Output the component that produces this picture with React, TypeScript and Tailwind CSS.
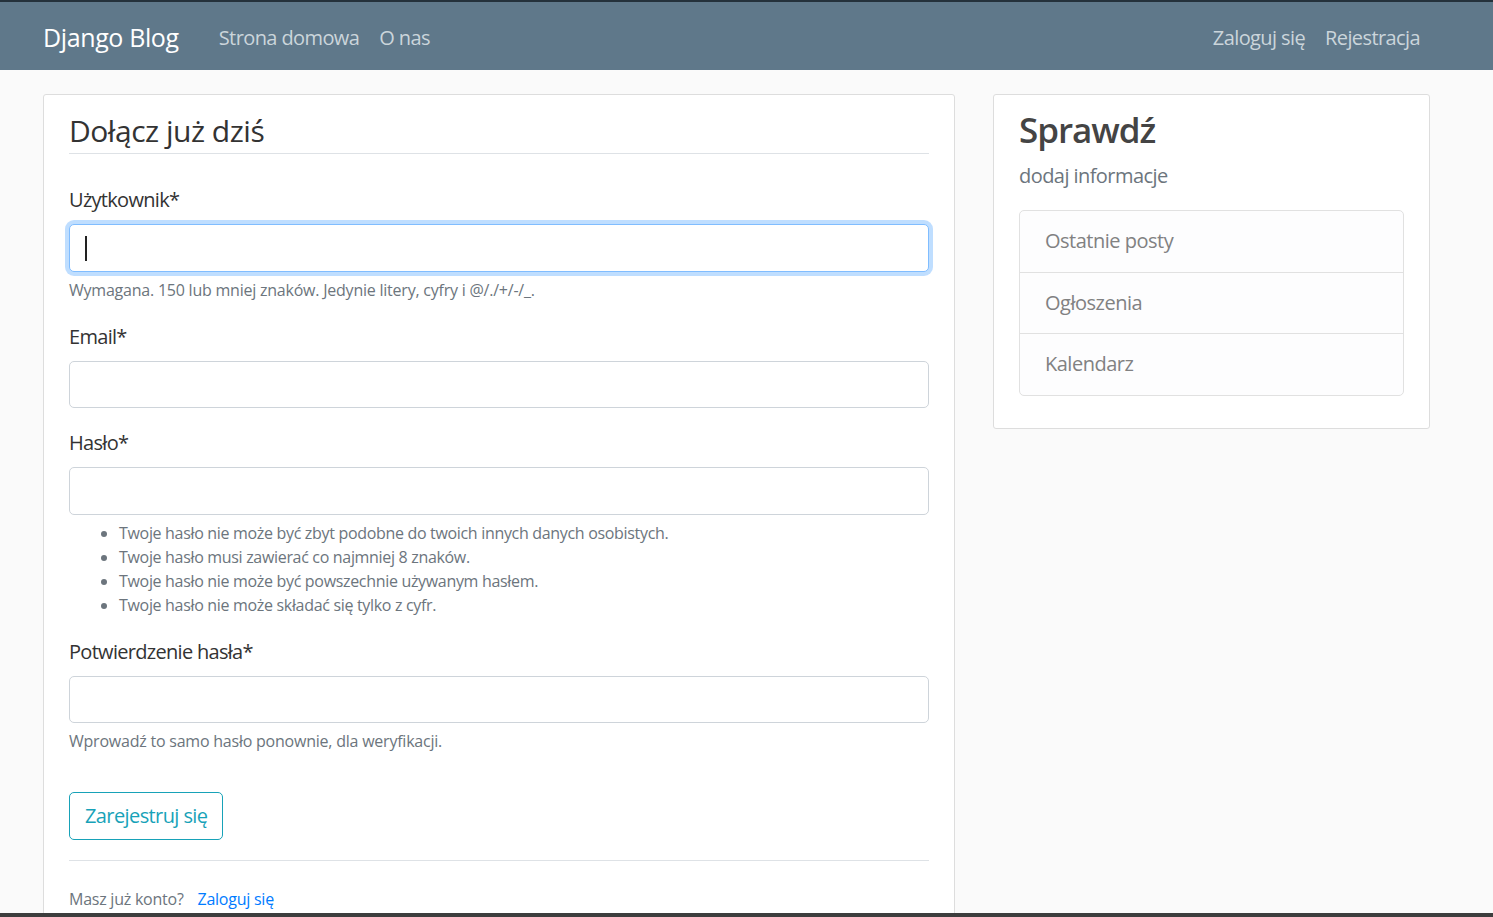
import React from 'react';

const font = "font-['Segoe_UI','Open_Sans',sans-serif]";

const Field = ({
  label,
  focused,
  help,
  children,
}: {
  label: string;
  focused?: boolean;
  help?: string;
  children?: React.ReactNode;
}) => (
  <div className="mb-[20px]">
    <label className="block text-[20px] leading-[30px] tracking-[-0.035em] mb-[9px] text-[#333]">{label}</label>
    <div className="relative">
      <input
        type="text"
        className={`block w-full h-[47.5px] rounded-[5px] bg-white px-[15px] outline-none ${
          focused
            ? 'border border-[#80bdff] shadow-[0_0_0_4px_rgba(0,123,255,0.25)]'
            : 'border border-[#ced4da]'
        }`}
      />
      {focused && <span className="absolute left-[16px] top-[12px] h-[25px] w-[1.5px] bg-[#222]"></span>}
    </div>
    {help && (
      <small className="block mt-[6px] text-[16px] leading-[24px] tracking-[-0.014em] text-[#6c757d]">{help}</small>
    )}
    {children}
  </div>
);

const passwordRules = [
  'Twoje hasło nie może być zbyt podobne do twoich innych danych osobistych.',
  'Twoje hasło musi zawierać co najmniej 8 znaków.',
  'Twoje hasło nie może być powszechnie używanym hasłem.',
  'Twoje hasło nie może składać się tylko z cyfr.',
];

export default function App() {
  return (
    <div className={`${font} h-[917px] overflow-hidden flex flex-col bg-[#fafafa] text-[#333]`}>
      <header className="h-[70px] shrink-0 bg-[#5f788a] border-t-2 border-[#24313b] flex items-center pt-[3px]">
        <nav className="w-[1387px] ml-[43px] flex items-center">
          <span className="text-[25px] leading-[37px] tracking-[-0.015em] text-white mr-[30px]">Django Blog</span>
          <div className="flex">
            <a className="px-[10px] text-[20px] leading-[30px] tracking-[-0.03em] text-[#cbd5db]">Strona domowa</a>
            <a className="px-[10px] text-[20px] leading-[30px] tracking-[-0.03em] text-[#cbd5db]">O nas</a>
          </div>
          <div className="flex ml-auto">
            <a className="px-[10px] text-[20px] leading-[30px] tracking-[-0.03em] text-[#cbd5db]">Zaloguj się</a>
            <a className="px-[10px] text-[20px] leading-[30px] tracking-[-0.03em] text-[#cbd5db]">Rejestracja</a>
          </div>
        </nav>
      </header>

      <main className="flex-1 overflow-hidden">
        <div className="w-[1387px] ml-[43px] mt-[24px] flex gap-[38px] items-start">
          <div className="w-[912px] shrink-0 bg-white border border-[#dddddd] rounded-[3px] px-[25px] pt-[13px] pb-[12px]">
            <form>
              <fieldset>
                <legend className="block w-full text-[30px] leading-[45px] tracking-[-0.016em] text-[#333] border-b border-[#dee2e6] mb-[31px]">
                  Dołącz już dziś
                </legend>
                <Field
                  label="Użytkownik*"
                  focused
                  help="Wymagana. 150 lub mniej znaków. Jedynie litery, cyfry i @/./+/-/_."
                />
                <Field label="Email*" />
                <Field label="Hasło*">
                  <ul className="mt-[6px] mb-[3px] pl-[50px] list-disc text-[16px] leading-[24px] tracking-[-0.02em] text-[#6c757d]">
                    {passwordRules.map((rule) => (
                      <li key={rule}>{rule}</li>
                    ))}
                  </ul>
                </Field>
                <Field label="Potwierdzenie hasła*" help="Wprowadź to samo hasło ponownie, dla weryfikacji." />
              </fieldset>
              <div className="mt-[19px] mb-[20px]">
                <button
                  type="button"
                  className="h-[47.5px] px-[15px] rounded-[5px] border border-[#17a2b8] text-[#17a2b8] text-[20px] leading-[30px] tracking-[-0.03em] bg-white"
                >
                  Zarejestruj się
                </button>
              </div>
            </form>
            <div className="border-t border-[#dee2e6] pt-[22px] text-[20px] leading-[30px]">
              <small className="text-[16px] tracking-[-0.015em] text-[#6c757d]">
                Masz już konto? <a className="ml-[10px] text-[#007bff]">Zaloguj się</a>
              </small>
            </div>
          </div>

          <aside className="w-[437px] shrink-0 bg-white border border-[#dddddd] rounded-[3px] px-[25px] pt-[14px] pb-[12px]">
            <h3 className="text-[35px] leading-[42px] font-semibold tracking-[-0.03em] text-[#444]">Sprawdź</h3>
            <p className="mt-[10px] mb-[19px] text-[20px] leading-[30px] tracking-[-0.028em] text-[#6c757d]">
              dodaj informacje
            </p>
            <ul className="mb-[20px] rounded-[5px] border border-[#e1e1e1] bg-[#fdfdfe] overflow-hidden">
              {['Ostatnie posty', 'Ogłoszenia', 'Kalendarz'].map((item, i) => (
                <li
                  key={item}
                  className={`px-[25px] py-[15.25px] text-[20px] leading-[30px] tracking-[-0.025em] text-[#818182] ${
                    i > 0 ? 'border-t border-[#e1e1e1]' : ''
                  }`}
                >
                  {item}
                </li>
              ))}
            </ul>
          </aside>
        </div>
      </main>
      <div className="h-[4px] shrink-0 bg-[#3d3d3d]"></div>
    </div>
  );
}
